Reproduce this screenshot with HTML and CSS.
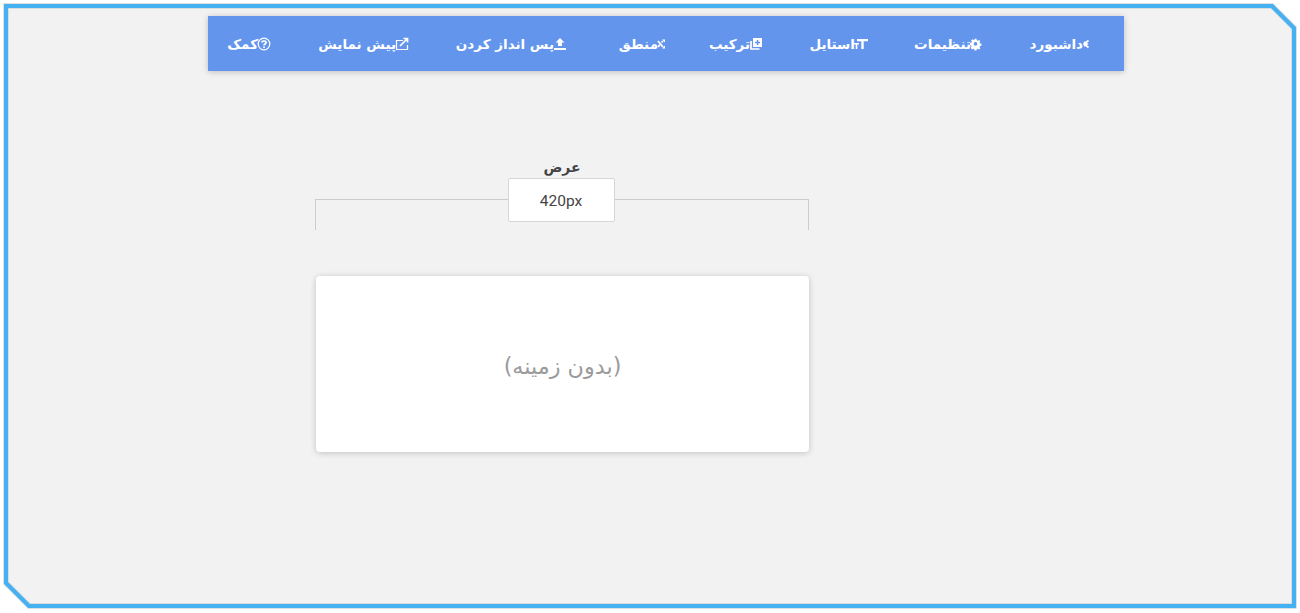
FILE: index.html
```html
<!DOCTYPE html>
<html lang="fa">
<head>
<meta charset="utf-8">
<title>فرم</title>
<link rel="stylesheet" href="styles.css">
</head>
<body>
<div class="frame">
  <svg class="frame-shape" width="1300" height="613" viewBox="0 0 1300 613" aria-hidden="true">
    <polygon class="frame-halo" points="6,6 1272,6 1294,28 1294,606 29,606 6,583"/>
    <polygon class="frame-line" points="6,6 1272,6 1294,28 1294,606 29,606 6,583"/>
  </svg>
  <nav class="nav" dir="rtl">
    <a class="nav-item"><svg class="icon icon-small" viewBox="0 0 8 14"><path class="st" d="M6.500 3.500 2 7l4.500 3.500M2 5l3 2-3 2"/></svg><span>داشبورد</span></a>
    <a class="nav-item"><svg class="icon icon-gear" viewBox="0 0 14 14"><path class="fl" fill-rule="evenodd" d="M5.800 1h2.400l.4 1.800 1.300.6 1.600-1 1.600 1.700-1 1.500.6 1.300 1.800.4v2.400l-1.800.4-.6 1.300 1 1.500-1.600 1.700-1.600-1-1.300.6-.4 1.800H5.800l-.4-1.800-1.300-.6-1.600 1L.9 12.300l1-1.500-.6-1.300L0 8.900V6.500l1.800-.4.600-1.300-1-1.500L3 1.600l1.600 1 1.300-.6zM7 5.200a2.300 2.300 0 1 0 0 4.600 2.300 2.300 0 0 0 0-4.600z" transform="scale(.92)"/></svg><span>تنظیمات</span></a>
    <a class="nav-item"><svg class="icon" viewBox="0 0 14 14"><path class="fl" d="M3 2h11v2.200h-4.300V12H7.300V4.200H3z"/><path class="fl" d="M0 6h5v1.500H3.300V12H1.700V7.500H0z"/></svg><span>استایل</span></a>
    <a class="nav-item"><svg class="icon" viewBox="0 0 14 14"><path class="fl" fill-rule="evenodd" d="M4 1h9v9H4zM7.800 3v1.700H6.100v1.600h1.700V8h1.500V6.300H11V4.700H9.300V3z"/><path class="st" d="M2 4v8h8.500"/></svg><span>ترکیب</span></a>
    <a class="nav-item"><svg class="icon icon-small" viewBox="0 0 8 14"><path class="st" d="M1 4l5 6M1 10l1.800-2.200M4.500 5.500 6 4"/><path class="fl" d="M5 2.500h3v3zM5 11.500h3v-3z"/></svg><span>منطق</span></a>
    <a class="nav-item"><svg class="icon" viewBox="0 0 14 14"><path class="fl" d="M7 1l4.500 4.500H9V9H5V5.500H2.500zM1 11h12v2H1z"/></svg><span>پس انداز کردن</span></a>
    <a class="nav-item"><svg class="icon" viewBox="0 0 14 14"><path class="st thin" d="M12.500 8v4.500h-11v-9H8"/><path class="st" d="M5 9l7-7M8.500 1.500h4v4"/></svg><span>پیش نمایش</span></a>
    <a class="nav-item"><svg class="icon" viewBox="0 0 14 14"><circle class="st thin" cx="7" cy="7" r="5.800"/><path class="st" d="M5 5.500C5 3.500 9 3.500 9 5.500 9 7 7 7 7 8.500M7 9.500v1.500"/></svg><span>کمک</span></a>
  </nav>
  <main class="editor">
    <div class="width-label">عرض</div>
    <div class="ruler"><div class="width-box">420px</div></div>
    <div class="card">(بدون زمینه)</div>
  </main>
</div>
</body>
</html>
```

FILE: styles.css
```css
* { box-sizing: border-box; }
html, body { margin: 0; height: 613px; overflow: hidden; background: #fff; }
body { font-family: "DejaVu Sans", "Noto Sans", sans-serif; }

.frame { position: relative; width: 1300px; height: 613px; padding-top: 16px; }
.frame-shape { position: absolute; left: 0; top: 0; }
.frame-halo { fill: #f2f2f2; stroke: #cfd6da; stroke-width: 5.5; }
.frame-line { fill: none; stroke: #45b1f3; stroke-width: 4; }

.nav {
  position: relative;
  display: grid;
  grid-template-columns: 60px 66px 57px 50px 50px 110px 90px 42px;
  align-items: center;
  column-gap: 48px;
  width: 916px;
  height: 55px;
  margin-left: 208px;
  padding: 0 34px 0 21px;
  background: #6495ed;
  box-shadow: 0 1px 6px rgba(0, 0, 0, .22);
}
.nav-item {
  display: flex;
  align-items: center;
  color: #fff;
  font-size: 13.5px;
  font-weight: 700;
  white-space: nowrap;
}
.nav-item span { margin-right: -1px; }
.icon { width: 14px; height: 14px; flex: none; }
.icon-small { width: 8px; }
.icon-gear { width: 12px; }
.fl { fill: #fff; }
.st { fill: none; stroke: #fff; stroke-width: 1.7; }
.thin { stroke-width: 1.2; }

.editor {
  position: relative;
  width: 494px;
  margin: 87px 0 0 315px;
  text-align: center;
}
.width-label {
  height: 20px;
  color: #444;
  font-size: 14px;
  font-weight: 700;
  line-height: 18px;
}
.ruler {
  position: relative;
  display: flex;
  justify-content: center;
  height: 52px;
}
.ruler::before {
  content: "";
  position: absolute;
  top: 21px;
  left: 0;
  right: 0;
  height: 30px;
  border: 1px solid #ccc;
  border-bottom: 0;
}
.width-box {
  position: relative;
  left: -1px;
  width: 107px;
  height: 44px;
  background: #fff;
  border: 1px solid #d6d6d6;
  border-radius: 2px;
  color: #444;
  font-family: Roboto, sans-serif;
  font-size: 15.5px;
  line-height: 44px;
}
.card {
  display: flex;
  align-items: center;
  justify-content: center;
  width: 493px;
  height: 176px;
  margin: 46px 0 0 1px;
  padding-top: 4px;
  background: #fff;
  border-radius: 4px;
  box-shadow: 0 1px 6px rgba(0, 0, 0, .2);
  color: #9b9b9b;
  font-size: 22.3px;
}
```
